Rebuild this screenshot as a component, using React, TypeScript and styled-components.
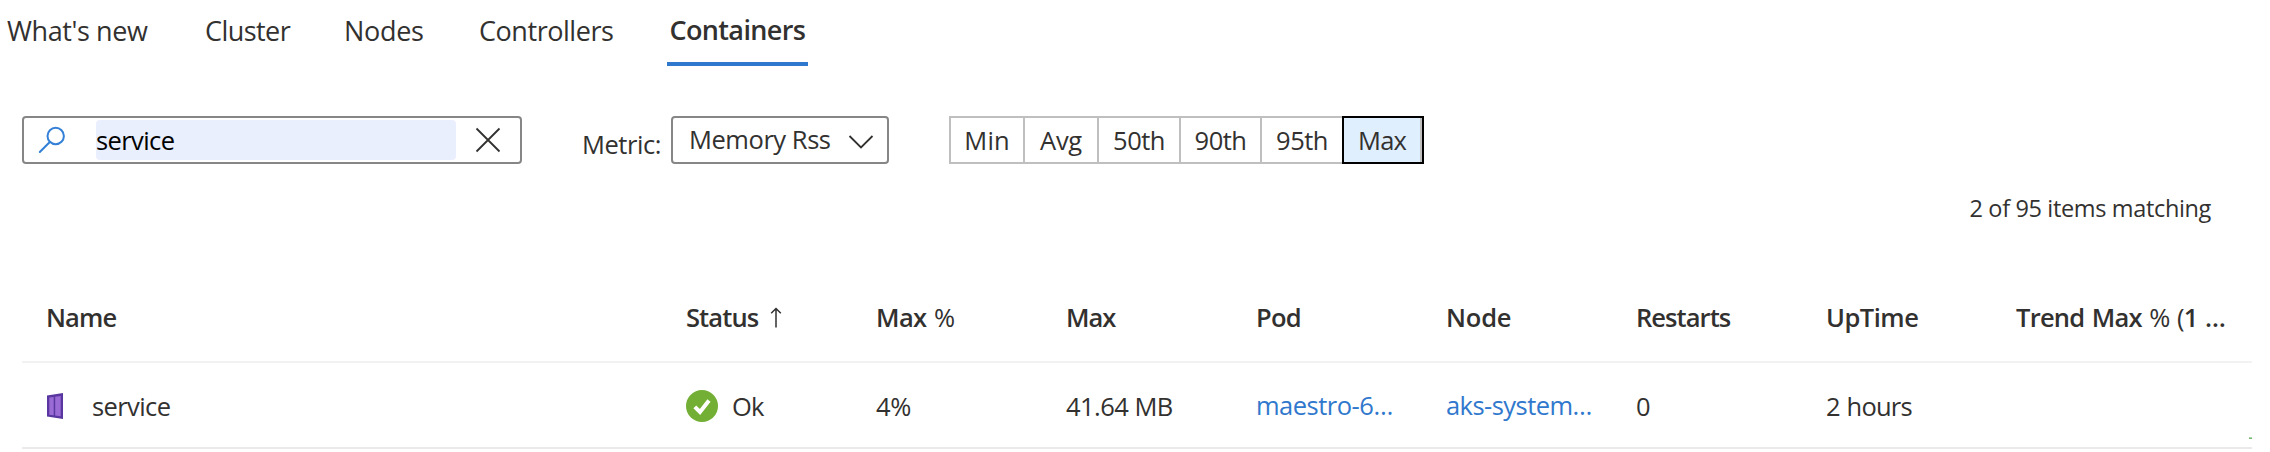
import React, { useState } from 'react';
import styled, { createGlobalStyle } from 'styled-components';

const GlobalStyle = createGlobalStyle`
  * { box-sizing: border-box; }
  body {
    margin: 0;
    background: #fff;
    color: #323130;
    font-family: 'Open Sans', 'Noto Sans', sans-serif;
    font-size: 25.5px;
  }
`;

const Page = styled.div`
  width: 2270px;
  height: 452px;
  overflow: hidden;
  white-space: nowrap;
`;

const Tabs = styled.nav`
  display: grid;
  grid-template-columns: 198px 139px 135px 188px 141px;
  padding-left: 7px;
  height: 66px;
  font-size: 27px;
`;

const Tab = styled.a<{ $active?: boolean; $track: number }>`
  padding-left: ${(p) => (p.$active ? 2.5 : 0)}px;
  line-height: ${(p) => (p.$active ? 59 : 61)}px;
  font-weight: ${(p) => (p.$active ? 600 : 400)};
  letter-spacing: ${(p) => p.$track}px;
  border-bottom: 4px solid ${(p) => (p.$active ? '#3078cd' : 'transparent')};
`;

const Toolbar = styled.div`
  display: flex;
  margin: 50px 0 0 22px;
  height: 48px;
`;

const SearchBox = styled.div`
  display: flex;
  align-items: center;
  width: 500px;
  border: 2px solid #868686;
  border-radius: 4px;
`;

const SearchIcon = styled.svg`
  width: 29px;
  height: 28px;
  margin: 0 30px 0 13px;
`;

const SearchInput = styled.input`
  width: 360px;
  height: 40px;
  padding: 0;
  border: 0;
  border-radius: 4px;
  outline: 0;
  background: #e9effd;
  color: #000;
  font: inherit;
  letter-spacing: -0.6px;
`;

const ClearIcon = styled.svg`
  width: 26px;
  height: 26px;
  margin-left: 19px;
`;

const Label = styled.label`
  width: 149px;
  padding-left: 60px;
  line-height: 56px;
  letter-spacing: -0.45px;
`;

const Select = styled.button`
  display: flex;
  align-items: center;
  justify-content: space-between;
  width: 218px;
  padding: 0 13px 2px 16px;
  border: 2px solid #868686;
  border-radius: 4px;
  background: #fff;
  color: inherit;
  font: inherit;
  letter-spacing: -0.45px;
`;

const Chevron = styled.svg`
  width: 26px;
  height: 16px;
  margin-top: 5px;
`;

const Segments = styled.div`
  display: flex;
  margin-left: 60px;
`;

const Segment = styled.button<{ $width: number; $track: number; $active?: boolean }>`
  width: ${(p) => p.$width}px;
  padding: 0 ${(p) => (p.$active ? 2 : 0)}px 0 0;
  border: 2px solid ${(p) => (p.$active ? '#000' : '#bfbfbf')};
  border-right-width: ${(p) => (p.$active ? 2 : 0)}px;
  background: ${(p) => (p.$active ? '#e0effe' : '#fff')};
  box-shadow: ${(p) => (p.$active ? 'inset -2px 0 #bfbfbf' : 'none')};
  color: inherit;
  font: inherit;
  letter-spacing: ${(p) => p.$track}px;
`;

const MatchCount = styled.div`
  height: 32px;
  margin: 28px 59px 0 0;
  line-height: 32px;
  font-size: 23.5px;
  letter-spacing: -0.35px;
  text-align: right;
`;

const Table = styled.div`
  width: 2230px;
  margin: 49px 0 0 22px;
`;

const Row = styled.div<{ $head?: boolean }>`
  display: grid;
  grid-template-columns: 640px repeat(7, 190px) 236px;
  height: ${(p) => (p.$head ? 90 : 86)}px;
  padding: 0 0 ${(p) => (p.$head ? 1 : 0)}px 24px;
  border-bottom: 2px solid ${(p) => (p.$head ? '#f2f2f2' : '#eaeaea')};
  font-weight: ${(p) => (p.$head ? 600 : 400)};
`;

const Cell = styled.div<{ $track?: number; $word?: number }>`
  display: flex;
  align-items: center;
  min-width: 0;
  padding-top: 1px;
  letter-spacing: ${(p) => p.$track ?? 0}px;
  word-spacing: ${(p) => p.$word ?? 0}px;
`;

const Thin = styled.span`
  font-weight: 400;
  white-space: pre;
`;

const Link = styled.a`
  color: #3078cd;
  padding-bottom: 1px;
`;

const SortArrow = styled.svg`
  width: 12px;
  height: 21px;
  margin-left: 12px;
`;

const ContainerIcon = styled.svg`
  width: 16px;
  height: 28px;
  margin: 0 29px 0 1px;
`;

const OkIcon = styled.svg`
  width: 32px;
  height: 32px;
  margin-right: 14px;
`;

const TrendCell = styled.div`
  display: flex;
  align-items: flex-end;
  justify-content: flex-end;
  padding: 0 0 8px;
`;

const TrendBar = styled.div`
  width: 3px;
  height: 2px;
  border-top: 1px solid #a9d5a8;
  background: #72b772;
`;

const tabs = [
  { name: "What's new", track: -0.4 },
  { name: 'Cluster', track: -0.55 },
  { name: 'Nodes', track: -0.3 },
  { name: 'Controllers', track: -0.45 },
  { name: 'Containers', track: -0.64 },
];

const percentiles = [
  { name: 'Min', width: 74, track: 0.1 },
  { name: 'Avg', width: 74, track: -0.3 },
  { name: '50th', width: 82, track: -0.5 },
  { name: '90th', width: 81, track: -0.5 },
  { name: '95th', width: 82, track: -0.5 },
  { name: 'Max', width: 82, track: -0.9 },
];

export default function App() {
  const [tab, setTab] = useState('Containers');
  const [percentile, setPercentile] = useState('Max');
  const [query, setQuery] = useState('service');

  return (
    <Page>
      <GlobalStyle />
      <Tabs>
        {tabs.map((t) => (
          <Tab key={t.name} $active={t.name === tab} $track={t.track} onClick={() => setTab(t.name)}>
            {t.name}
          </Tab>
        ))}
      </Tabs>

      <Toolbar>
        <SearchBox>
          <SearchIcon viewBox="0 0 29 28" fill="none" stroke="#3480d6" strokeWidth="2">
            <circle cx="18.700" cy="10" r="8.200" />
            <path d="M12.800 16 2.800 26" strokeLinecap="round" />
          </SearchIcon>
          <SearchInput value={query} onChange={(e) => setQuery(e.target.value)} />
          <ClearIcon viewBox="0 0 26 26" fill="none" stroke="#323130" strokeWidth="1.8">
            <path d="M1.5 1.5l23 23M24.5 1.5l-23 23" />
          </ClearIcon>
        </SearchBox>
        <Label>Metric:</Label>
        <Select>
          Memory Rss
          <Chevron viewBox="0 0 26 16" fill="none" stroke="#323130" strokeWidth="1.8">
            <path d="M1.5 2 13 13.5 24.5 2" />
          </Chevron>
        </Select>
        <Segments>
          {percentiles.map((p) => (
            <Segment
              key={p.name}
              $width={p.width}
              $track={p.track}
              $active={p.name === percentile}
              onClick={() => setPercentile(p.name)}
            >
              {p.name}
            </Segment>
          ))}
        </Segments>
      </Toolbar>

      <MatchCount>2 of 95 items matching</MatchCount>

      <Table>
        <Row $head>
          <Cell $track={-0.85}>Name</Cell>
          <Cell $track={-0.9}>
            Status
            <SortArrow viewBox="0 0 12 21" fill="none" stroke="#323130" strokeWidth="1.5">
              <path d="M6 20.500V1.500M1.200 6.300 6 1.500l4.800 4.800" />
            </SortArrow>
          </Cell>
          <Cell $track={-0.6} $word={1.5}>
            Max<Thin> %</Thin>
          </Cell>
          <Cell $track={-1}>Max</Cell>
          <Cell $track={-0.8}>Pod</Cell>
          <Cell $track={-0.2}>Node</Cell>
          <Cell $track={-0.93}>Restarts</Cell>
          <Cell $track={-0.5}>UpTime</Cell>
          <Cell $track={-0.75} $word={1.5}>
            Trend Max<Thin> % (</Thin>
            <span>1 …</span>
          </Cell>
        </Row>
        <Row>
          <Cell $track={-0.6}>
            <ContainerIcon viewBox="0 0 16 28">
              <path d="M0 3.500 16 1v26L0 24.500z" fill="#5a37a0" />
              <path d="M2.300 5.500 6.700 4.900v18.400l-4.400-.6zM8.200 4.700 13.700 3.900v20.400l-5.500-.8z" fill="#9b6bd5" />
            </ContainerIcon>
            service
          </Cell>
          <Cell $track={-0.9}>
            <OkIcon viewBox="0 0 32 32">
              <circle cx="16" cy="16" r="16" fill="#73af34" />
              <path d="M8.800 16.800 14 22 23 10.500" fill="none" stroke="#fff" strokeWidth="4" />
            </OkIcon>
            Ok
          </Cell>
          <Cell $track={-0.3}>4%</Cell>
          <Cell $track={-0.54}>41.64 MB</Cell>
          <Cell $track={-0.5}>
            <Link>maestro-6…</Link>
          </Cell>
          <Cell $track={-0.55}>
            <Link>aks-system…</Link>
          </Cell>
          <Cell>0</Cell>
          <Cell $track={-0.8} $word={1}>2 hours</Cell>
          <TrendCell>
            <TrendBar />
          </TrendCell>
        </Row>
      </Table>
    </Page>
  );
}
